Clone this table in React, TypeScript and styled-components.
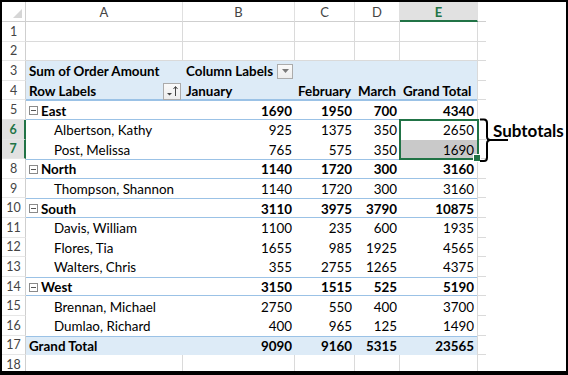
import React from 'react';
import styled, { createGlobalStyle, css } from 'styled-components';

const GRID = '#DADADA';
const HEAD_LINE = '#CFCFCF';
const GREEN = '#217346';
const BLUE_FILL = '#DDEBF7';
const BLUE_LINE = '#9BC2E6';
const SEL_FILL = '#C9C9C9';

type Kind = 'region' | 'item' | 'total';

interface PivotRow {
  kind: Kind;
  label: string;
  values: number[];
}

const pivotRows: PivotRow[] = [
  { kind: 'region', label: 'East', values: [1690, 1950, 700, 4340] },
  { kind: 'item', label: 'Albertson, Kathy', values: [925, 1375, 350, 2650] },
  { kind: 'item', label: 'Post, Melissa', values: [765, 575, 350, 1690] },
  { kind: 'region', label: 'North', values: [1140, 1720, 300, 3160] },
  { kind: 'item', label: 'Thompson, Shannon', values: [1140, 1720, 300, 3160] },
  { kind: 'region', label: 'South', values: [3110, 3975, 3790, 10875] },
  { kind: 'item', label: 'Davis, William', values: [1100, 235, 600, 1935] },
  { kind: 'item', label: 'Flores, Tia', values: [1655, 985, 1925, 4565] },
  { kind: 'item', label: 'Walters, Chris', values: [355, 2755, 1265, 4375] },
  { kind: 'region', label: 'West', values: [3150, 1515, 525, 5190] },
  { kind: 'item', label: 'Brennan, Michael', values: [2750, 550, 400, 3700] },
  { kind: 'item', label: 'Dumlao, Richard', values: [400, 965, 125, 1490] },
  { kind: 'total', label: 'Grand Total', values: [9090, 9160, 5315, 23565] }
];

const columns = ['A', 'B', 'C', 'D', 'E'];
const selectedCol = 'E';
const selectedRows = [6, 7];

const GlobalStyle = createGlobalStyle`
  * { box-sizing: border-box; }
  html, body { margin: 0; padding: 0; background: #fff; }
  body { font-family: Lato, "Open Sans", sans-serif; }
`;

const Frame = styled.div`
  width: 568px;
  height: 375px;
  border: 2px solid #000;
  border-bottom-width: 4px;
  overflow: hidden;
  background: #fff;
`;

const Sheet = styled.div`
  display: grid;
  grid-template-columns: 24px 157px 112px 60px 45px 78px 8px 1fr;
  grid-template-rows: 20px repeat(18, 19.6px);
  font-family: Lato, 'Open Sans', sans-serif;
  font-size: 13.4px;
  color: #000;
`;

const Corner = styled.div`
  grid-row: 1;
  grid-column: 1;
  display: flex;
  align-items: flex-end;
  justify-content: flex-end;
  padding: 0 3px 3px 0;
  border-right: 1px solid ${HEAD_LINE};
  border-bottom: 1px solid ${HEAD_LINE};

  &::after {
    content: '';
    border-left: 9px solid transparent;
    border-bottom: 9px solid #D6D6D6;
  }
`;

const ColHead = styled.div<{ $c: number; $sel?: boolean }>`
  grid-row: 1;
  grid-column: ${p => p.$c};
  display: flex;
  align-items: center;
  justify-content: center;
  font-size: 13px;
  color: #444;
  border-right: 1px solid #E0E0E0;
  border-bottom: 1px solid ${HEAD_LINE};
  background: #fff;

  ${p =>
    p.$sel &&
    css`
      background: #E1E1E1;
      color: ${GREEN};
      font-weight: 700;
      border-bottom: 2px solid ${GREEN};
      padding-top: 1px;
    `}
`;

const EdgeHead = styled.div`
  grid-row: 1;
  grid-column: 7;
  border-bottom: 1px solid ${HEAD_LINE};
`;

const RowHead = styled.div<{ $r: number; $sel?: boolean }>`
  grid-row: ${p => p.$r + 1};
  grid-column: 1;
  display: flex;
  align-items: center;
  justify-content: center;
  font-size: 12.5px;
  color: #444;
  border-right: 1px solid ${HEAD_LINE};
  border-bottom: 1px solid #E6E6E6;

  ${p =>
    p.$sel &&
    css`
      background: #E1E1E1;
      color: ${GREEN};
      font-weight: 700;
      border-right: 2px solid ${GREEN};
    `}
`;

const Blank = styled.div<{ $r: number; $c: number }>`
  grid-row: ${p => p.$r + 1};
  grid-column: ${p => p.$c};
  border-right: 1px solid ${GRID};
  border-bottom: 1px solid ${GRID};
`;

const Stub = styled.div<{ $r: number }>`
  grid-row: ${p => p.$r + 1};
  grid-column: 7;
  border-bottom: 1px solid ${GRID};
`;

const lineShadow = {
  none: 'none',
  head: `inset 0 -1px 0 ${BLUE_LINE}`,
  region: `inset 0 1px 0 ${BLUE_LINE}, inset 0 -1px 0 ${BLUE_LINE}`,
  total: `inset 0 1px 0 ${BLUE_LINE}`
};

const PCell = styled.div<{
  $r: number;
  $c: number;
  $fill?: string;
  $lines?: keyof typeof lineShadow;
  $right?: boolean;
  $bold?: boolean;
  $indent?: number;
}>`
  grid-row: ${p => p.$r + 1};
  grid-column: ${p => p.$c};
  display: flex;
  align-items: center;
  justify-content: ${p => (p.$right ? 'flex-end' : 'flex-start')};
  padding: 1px 3px 0 ${p => 3 + (p.$indent ?? 0)}px;
  white-space: nowrap;
  background: ${p => p.$fill ?? '#fff'};
  font-weight: ${p => (p.$bold ? 700 : 400)};
  box-shadow: ${p => lineShadow[p.$lines ?? 'none']};
  border-right: ${p => (p.$c === 6 ? `1px solid ${GRID}` : 'none')};
`;

const Collapse = styled.span`
  display: inline-flex;
  align-items: center;
  justify-content: center;
  width: 9px;
  height: 9px;
  margin-right: 3px;
  border: 1px solid #8A8A8A;
  background: #fff;

  &::before {
    content: '';
    width: 5px;
    height: 1px;
    background: #555;
  }
`;

const FilterButton = styled.span<{ $size: number }>`
  display: inline-flex;
  align-items: center;
  justify-content: center;
  width: ${p => p.$size}px;
  height: ${p => p.$size - 1}px;
  margin-left: auto;
  margin-right: -1px;
  border: 1px solid #ABABAB;
  background: linear-gradient(#FAFAFA, #EDEDED);
`;

const Selection = styled.div`
  grid-row: 7 / 9;
  grid-column: 6;
  margin: -1px;
  border: 2px solid ${GREEN};
  position: relative;
  z-index: 2;
  pointer-events: none;

  &::after {
    content: '';
    position: absolute;
    right: -4px;
    bottom: -4px;
    width: 6px;
    height: 6px;
    background: ${GREEN};
    border: 1px solid #fff;
  }
`;

const Annotation = styled.div`
  grid-row: 7 / 9;
  grid-column: 7 / 9;
  margin: -1.5px 0 -3.5px;
  display: flex;
  align-items: flex-start;
  z-index: 3;
`;

const Bracket = styled.svg`
  flex: none;
  overflow: visible;
`;

const Label = styled.span`
  margin-top: 4px;
  font-family: Lato, 'Open Sans', sans-serif;
  font-size: 17px;
  line-height: 17px;
  font-weight: 700;
  color: #000;
`;

const DropIcon = () => (
  <svg width="9" height="6" viewBox="0 0 9 6">
    <path d="M1 1 H8 L4.5 5 Z" fill="#7A7A7A" />
  </svg>
);

const SortIcon = () => (
  <svg width="13" height="12" viewBox="0 0 13 12">
    <path d="M1 8 H6 L3.5 10.5 Z" fill="#444" />
    <path d="M9.5 11 V2" stroke="#444" strokeWidth="1" />
    <path d="M7.5 4 L9.5 1.5 L11.5 4" stroke="#444" strokeWidth="1" fill="none" />
  </svg>
);

const App: React.FC = () => {
  const emptyRows = [1, 2, 18];

  return (
    <>
      <GlobalStyle />
      <Frame>
        <Sheet>
          <Corner />
          {columns.map((col, i) => (
            <ColHead key={col} $c={i + 2} $sel={col === selectedCol}>
              {col}
            </ColHead>
          ))}
          <EdgeHead />

          {Array.from({ length: 18 }, (_, i) => i + 1).map(r => (
            <React.Fragment key={r}>
              <RowHead $r={r} $sel={selectedRows.includes(r)}>
                {r}
              </RowHead>
              <Stub $r={r} />
            </React.Fragment>
          ))}

          {emptyRows.map(r =>
            columns.map((col, i) => <Blank key={`${r}${col}`} $r={r} $c={i + 2} />)
          )}

          {/* pivot header */}
          <PCell $r={3} $c={2} $fill={BLUE_FILL} $bold>
            Sum of Order Amount
          </PCell>
          <PCell $r={3} $c={3} $fill={BLUE_FILL} $bold>
            Column Labels
            <FilterButton $size={16}>
              <DropIcon />
            </FilterButton>
          </PCell>
          <PCell $r={3} $c={4} $fill={BLUE_FILL} />
          <PCell $r={3} $c={5} $fill={BLUE_FILL} />
          <PCell $r={3} $c={6} $fill={BLUE_FILL} />

          <PCell $r={4} $c={2} $fill={BLUE_FILL} $lines="head" $bold>
            Row Labels
            <FilterButton $size={18}>
              <SortIcon />
            </FilterButton>
          </PCell>
          {['January', 'February', 'March', 'Grand Total'].map((h, i) => (
            <PCell key={h} $r={4} $c={i + 3} $fill={BLUE_FILL} $lines="head" $bold>
              {h}
            </PCell>
          ))}

          {pivotRows.map((row, idx) => {
            const r = 5 + idx;
            const bold = row.kind !== 'item';
            const fill = row.kind === 'total' ? BLUE_FILL : undefined;
            const lines = row.kind === 'item' ? 'none' : row.kind;
            return (
              <React.Fragment key={row.label}>
                <PCell
                  $r={r}
                  $c={2}
                  $bold={bold}
                  $fill={fill}
                  $lines={lines}
                  $indent={row.kind === 'item' ? 25 : 0}
                >
                  {row.kind === 'region' && <Collapse />}
                  {row.label}
                </PCell>
                {row.values.map((v, i) => (
                  <PCell
                    key={i}
                    $r={r}
                    $c={i + 3}
                    $right
                    $bold={bold}
                    $lines={lines}
                    $fill={r === 7 && i === 3 ? SEL_FILL : fill}
                  >
                    {v}
                  </PCell>
                ))}
              </React.Fragment>
            );
          })}

          <Selection />

          <Annotation>
            <Bracket width="15" height="44" viewBox="0 0 15 44">
              <path
                d="M2 1.5 H6 Q9 1.5 9 5 V18.5 Q9 22 12.5 22 Q9 22 9 25.5 V39.5 Q9 43 6 43 H2 M12.5 22 H30"
                stroke="#000"
                strokeWidth="2"
                fill="none"
              />
            </Bracket>
            <Label>Subtotals</Label>
          </Annotation>
        </Sheet>
      </Frame>
    </>
  );
};

export default App;
